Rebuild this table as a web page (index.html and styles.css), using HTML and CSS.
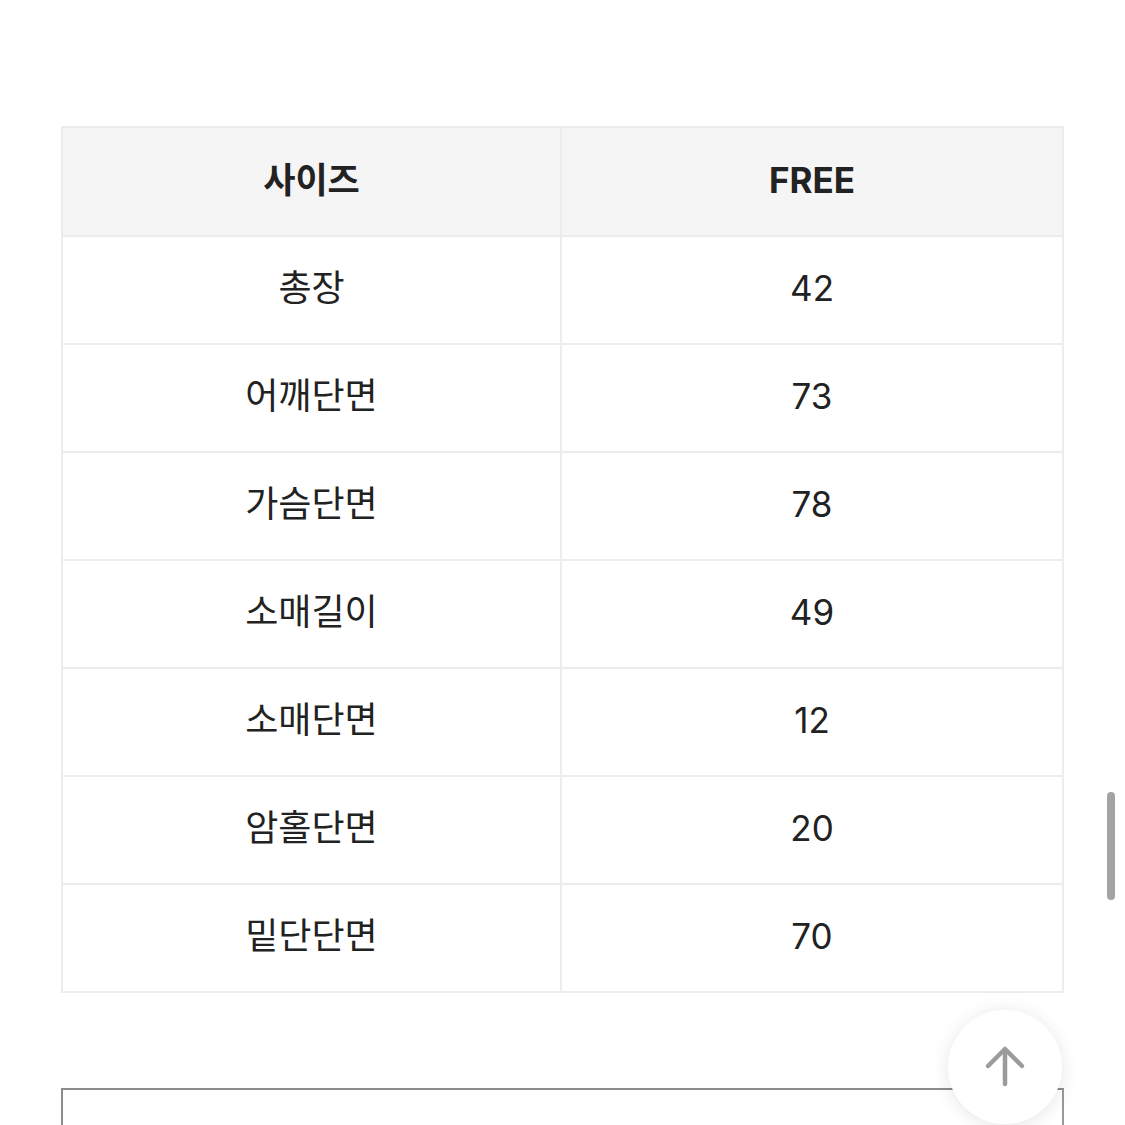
FILE: index.html
```html
<!DOCTYPE html>
<html lang="ko">
<head>
<meta charset="utf-8">
<link rel="stylesheet" href="styles.css">
</head>
<body>
<div class="page">
  <table class="size-table">
    <colgroup>
      <col class="col-label">
      <col class="col-value">
    </colgroup>
    <thead>
      <tr><th>사이즈</th><th>FREE</th></tr>
    </thead>
    <tbody>
      <tr><td>총장</td><td>42</td></tr>
      <tr><td>어깨단면</td><td>73</td></tr>
      <tr><td>가슴단면</td><td>78</td></tr>
      <tr><td>소매길이</td><td>49</td></tr>
      <tr><td>소매단면</td><td>12</td></tr>
      <tr><td>암홀단면</td><td>20</td></tr>
      <tr><td>밑단단면</td><td>70</td></tr>
    </tbody>
  </table>
  <div class="next-box"></div>
</div>
<button class="to-top" aria-label="맨 위로">
  <svg width="44" height="44" viewBox="0 0 44 44" fill="none" stroke="#9b9b9b" stroke-width="4.5" stroke-linecap="round" stroke-linejoin="round">
    <path d="M22 39V5"/>
    <path d="M5 21L22 4L39 21"/>
  </svg>
</button>
<div class="scroll-thumb"></div>
</body>
</html>
```
FILE: styles.css
```css
html, body {
  margin: 0;
  padding: 0;
  height: 100%;
  overflow: hidden;
  background: #ffffff;
}
body {
  font-family: "Inter", "Noto Sans CJK KR", sans-serif;
  color: #222222;
}
.page {
  padding: 126px 61px 0 61px;
}
.size-table {
  width: 1003px;
  border-collapse: collapse;
  table-layout: fixed;
  border: 2px solid #ececec;
}
.col-label {
  width: 499px;
}
.size-table th,
.size-table td {
  border: 2px solid #ececec;
  height: 106px;
  padding: 0 0 4px 0;
  text-align: center;
  vertical-align: middle;
  font-size: 35px;
  line-height: 1;
}
.size-table th {
  background: #f5f5f5;
  font-weight: 700;
  height: 105px;
  padding: 0 0 2px 0;
}
.size-table td {
  font-weight: 400;
  background: #ffffff;
  height: 102px;
}
.size-table td:first-child {
  font-size: 36px;
}
.next-box {
  margin-top: 95px;
  width: 999px;
  height: 200px;
  border: 2px solid #9a9a9a;
  border-top-color: #8c8c8c;
  border-left-color: #8c8c8c;
}
.to-top {
  position: fixed;
  left: 948px;
  top: 1010px;
  width: 114px;
  height: 114px;
  border-radius: 50%;
  border: none;
  background: #ffffff;
  box-shadow: 0 2px 18px rgba(0, 0, 0, 0.10);
  display: flex;
  align-items: center;
  justify-content: center;
  padding: 0;
}
.scroll-thumb {
  position: fixed;
  left: 1107px;
  top: 792px;
  width: 8px;
  height: 108px;
  border-radius: 4px;
  background: #a3a3a3;
}
```
